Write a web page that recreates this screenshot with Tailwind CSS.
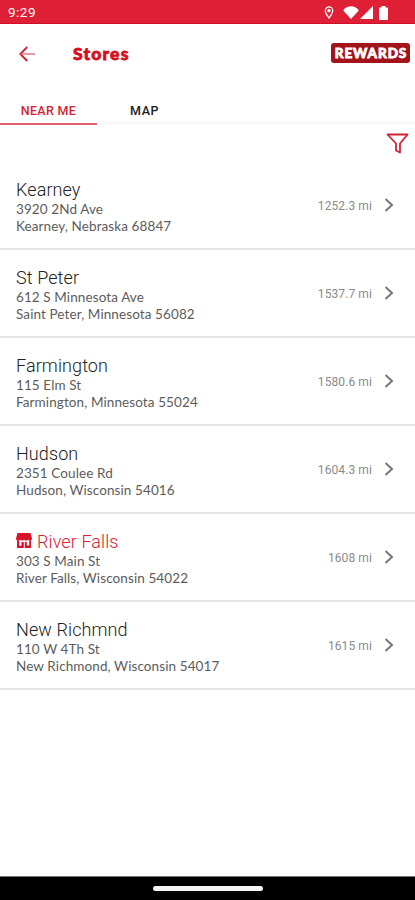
<!DOCTYPE html>
<html lang="en">
<head>
    <meta charset="UTF-8">
    <meta name="viewport" content="width=device-width, initial-scale=1.0">
    <title>Stores</title>
    <script src="https://cdn.jsdelivr.net/npm/@tailwindcss/browser@4"></script>
</head>
<body class="bg-white font-['Roboto',sans-serif]">
    <div class="w-[415px] h-[900px] flex flex-col overflow-hidden">
        <!-- Status bar -->
        <div class="h-6 shrink-0 bg-[#df1f35] border-b border-[#d00f28] flex items-center justify-between pl-2 pr-[27px] text-white">
            <span class="text-[13.5px] leading-none pt-[3px] tracking-[0.5px]">9:29</span>
            <div class="flex items-center pt-[2px]">
                <svg class="w-[10px] h-[13px] mr-[9px]" viewBox="0 0 10 14" fill="none" stroke="currentColor" stroke-width="1.3">
                    <path d="M5 13C3 10 1 7.700 1 5a4 4 0 0 1 8 0c0 2.700-2 5-4 8z"/>
                    <circle cx="5" cy="5" r="1.200" fill="currentColor"/>
                </svg>
                <svg class="w-4 h-[13px] mr-[1px]" viewBox="0 0 16 13" fill="currentColor">
                    <path d="M8 13L.2 4.500C2.200 1.500 5 .3 8 .3s5.800 1.200 7.800 4.200z"/>
                </svg>
                <svg class="w-[13px] h-[13px] mr-[6px]" viewBox="0 0 13 13" fill="currentColor">
                    <path d="M13 0v13H0z"/>
                </svg>
                <svg class="w-[9px] h-[14px]" viewBox="0 0 9 14" fill="currentColor">
                    <path d="M2.500 0h4v1.500h1.700q.8 0 .8.800v10.900q0 .8-.8.800H.8q-.8 0-.8-.8V2.300q0-.8.800-.8h1.700z"/>
                </svg>
            </div>
        </div>

        <!-- Header -->
        <header class="h-[62px] shrink-0 flex items-center pl-[19px] pr-[5px]">
            <svg class="w-4 h-4 mr-[38px] -mt-[2px]" viewBox="0 0 16 16" fill="none" stroke="#d31c30">
                <path d="M8.300 1L1.300 8l7 7" stroke-width="1.8"/>
                <path d="M1.300 8H16" stroke-width="1.3" stroke="#e0606c"/>
            </svg>
            <h1 class="font-['Lato',sans-serif] font-black text-[17.5px] leading-none text-[#d4101f] tracking-[1.2px] [-webkit-text-stroke:0.8px_#d4101f] -mt-[2px]">Stores</h1>
            <div class="ml-auto -mt-[4px] w-[79px] h-5 rounded-[3px] bg-[#a3131a] text-white font-['Lato',sans-serif] font-black text-[13.5px] leading-none flex items-center justify-center tracking-[0.9px] [-webkit-text-stroke:0.8px_#fff] pt-[1px] pl-[1px]">REWARDS</div>
        </header>

        <!-- Tabs -->
        <nav class="h-[39px] shrink-0 flex text-[12.5px] font-medium leading-none">
            <div class="w-[97px] h-full border-b-2 border-[#e2616d] text-[#d61f31] text-center pt-[19px] tracking-[0.3px]">NEAR ME</div>
            <div class="flex-1 h-full border-b-4 border-[#fafafa] text-[#202020] pt-[19px] pl-[33px] tracking-[0.6px]">MAP</div>
        </nav>

        <!-- Filter -->
        <div class="h-[37px] shrink-0 flex justify-end pr-[6px] pt-[8px]">
            <svg class="w-[23px] h-[21px]" viewBox="0 0 23 21" fill="none" stroke="#ce2433" stroke-width="1.8" stroke-linejoin="round">
                <path d="M1.500 1.500h20L14 10.500v9l-4-2v-7z"/>
            </svg>
        </div>

        <!-- Store list -->
        <ul id="storeList" class="flex-1"></ul>

        <!-- Navigation bar -->
        <div class="h-6 shrink-0 bg-black border-t border-[#777] flex justify-center pt-[9px]">
            <div class="w-[110px] h-[5px] rounded-full bg-[#f5f5f5]"></div>
        </div>
    </div>

    <template id="storeRow">
        <li class="h-[88px] border-b-2 border-[#e6e6e6] flex items-center pl-4 pr-[21px]">
            <div class="flex-1 pt-[3px]">
                <div class="flex items-center h-[22px] text-[18px] font-light text-[#222] tracking-[0.1px]">
                    <svg class="icon hidden w-4 h-[15px] mr-[5px] -mt-[2px]" viewBox="0 0 16 15" fill="#d9132a">
                        <path d="M1.500 0h13L16 5.500C16 7 15 7.600 14 7.600S12.200 7 12 6.400C11.700 7.200 11 7.600 10 7.600S8.200 7 8 6.400C7.800 7.200 7 7.600 6 7.600S4.300 7.200 4 6.400C3.800 7 3 7.600 2 7.600S0 7 0 5.500z"/>
                        <path d="M1 7.200h2.200v5.500H5.500V9h2.300v6H1zM8.800 9h2v3.500h2.400V7.200H15V15H8.800z"/>
                    </svg>
                    <span class="name -mt-[1px]"></span>
                </div>
                <div class="font-['Lato',sans-serif] text-[13.5px] leading-[17px] text-[#5c5c5c] tracking-[0.1px]">
                    <p class="street"></p>
                    <p class="city"></p>
                </div>
            </div>
            <span class="distance text-[12px] text-[#8a8a8a] tracking-[0.1px] mr-[12px] pt-[2px]"></span>
            <svg class="w-[10px] h-[14px]" viewBox="0 0 10 14" fill="none" stroke="#777" stroke-width="2">
                <path d="M1.500 1l6.500 6-6.500 6"/>
            </svg>
        </li>
    </template>

    <script>
        const stores = [
            { name: 'Kearney', street: '3920 2Nd Ave', city: 'Kearney, Nebraska 68847', distance: '1252.3 mi' },
            { name: 'St Peter', street: '612 S Minnesota Ave', city: 'Saint Peter, Minnesota 56082', distance: '1537.7 mi' },
            { name: 'Farmington', street: '115 Elm St', city: 'Farmington, Minnesota 55024', distance: '1580.6 mi' },
            { name: 'Hudson', street: '2351 Coulee Rd', city: 'Hudson, Wisconsin 54016', distance: '1604.3 mi' },
            { name: 'River Falls', street: '303 S Main St', city: 'River Falls, Wisconsin 54022', distance: '1608 mi', favorite: true },
            { name: 'New Richmnd', street: '110 W 4Th St', city: 'New Richmond, Wisconsin 54017', distance: '1615 mi' }
        ];

        const list = document.getElementById('storeList');
        const template = document.getElementById('storeRow');
        stores.forEach(store => {
            const row = template.content.cloneNode(true);
            ['name', 'street', 'city', 'distance'].forEach(key => {
                row.querySelector('.' + key).textContent = store[key];
            });
            // Favorite store gets the red name and shop icon
            if (store.favorite) {
                row.querySelector('.icon').classList.remove('hidden');
                row.querySelector('.name').classList.add('text-[#dc2036]');
            }
            list.appendChild(row);
        });
    </script>
</body>
</html>
